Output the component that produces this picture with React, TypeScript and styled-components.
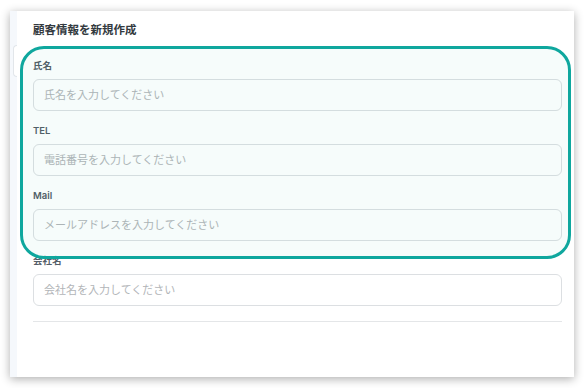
import styled, { createGlobalStyle } from 'styled-components'

const GlobalStyle = createGlobalStyle`
  html, body {
    margin: 0;
    padding: 0;
    background: #ffffff;
  }

  body {
    font-family: Inter, 'Noto Sans CJK JP', sans-serif;
  }
`

const Page = styled.div`
  width: 585px;
  height: 388px;
  padding: 11px 11px 11px 10px;
  box-sizing: border-box;
`

const Card = styled.div`
  height: 100%;
  display: flex;
  background: #ffffff;
  box-shadow: 0 2px 9px rgba(0, 0, 0, 0.32);
`

const Strip = styled.div`
  width: 7px;
  flex-shrink: 0;
  background: #f5f8fc;
  padding-top: 34px;
  box-sizing: border-box;
  display: flex;
  justify-content: flex-end;
`

const StripTab = styled.div`
  width: 3px;
  height: 30px;
  border: 1px solid #e2e6ea;
  border-right: none;
  border-radius: 6px 0 0 6px;
  background: #ffffff;
`

const Content = styled.div`
  flex: 1;
  padding: 11px 12px 0 16px;
  display: flex;
  flex-direction: column;
`

const Title = styled.h2`
  margin: 0 0 21px;
  font-size: 11.5px;
  line-height: 16px;
  font-weight: 700;
  color: #333a40;
`

const Form = styled.div`
  position: relative;
  display: flex;
  flex-direction: column;
  gap: 13px;
`

const Field = styled.div`
  display: flex;
  flex-direction: column;
  gap: 6px;
`

const Label = styled.label`
  font-size: 9.5px;
  line-height: 14px;
  font-weight: 600;
  color: #545d67;
`

const Input = styled.input`
  height: 32px;
  box-sizing: border-box;
  padding: 0 10px;
  border: 1px solid #dcdfe2;
  border-radius: 6px;
  background: transparent;
  font-family: inherit;
  font-size: 11px;
  color: #333;
  outline: none;

  &::placeholder {
    color: #b2b5b8;
  }
`

const Divider = styled.hr`
  margin: 15px 0 0;
  border: none;
  border-top: 1px solid #e4e6e8;
`

const Highlight = styled.div`
  position: absolute;
  top: -13px;
  left: -13px;
  right: -9px;
  height: 213px;
  box-sizing: border-box;
  border: 3px solid #0fa79e;
  border-radius: 24px;
  background: rgba(15, 167, 158, 0.04);
  pointer-events: none;
`

const fields = [
  { label: '氏名', placeholder: '氏名を入力してください' },
  { label: 'TEL', placeholder: '電話番号を入力してください' },
  { label: 'Mail', placeholder: 'メールアドレスを入力してください' },
  { label: '会社名', placeholder: '会社名を入力してください' },
]

export default function App() {
  return (
    <>
      <GlobalStyle />
      <Page>
        <Card>
          <Strip>
            <StripTab />
          </Strip>
          <Content>
            <Title>顧客情報を新規作成</Title>
            <Form>
              {fields.map((f) => (
                <Field key={f.label}>
                  <Label>{f.label}</Label>
                  <Input placeholder={f.placeholder} />
                </Field>
              ))}
              <Highlight />
            </Form>
            <Divider />
          </Content>
        </Card>
      </Page>
    </>
  )
}
